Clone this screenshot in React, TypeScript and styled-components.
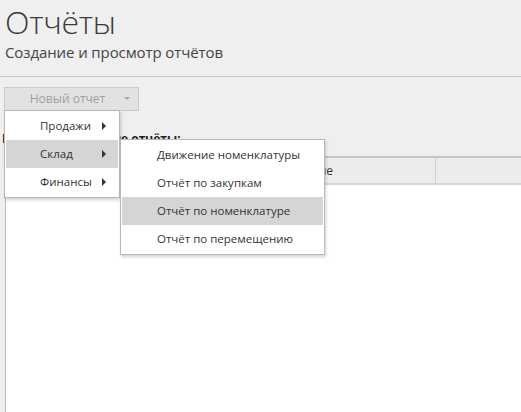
import styled, { createGlobalStyle } from 'styled-components';

const GlobalStyle = createGlobalStyle`
  html, body {
    margin: 0;
    padding: 0;
    background: #efefef;
    font-family: 'Open Sans', 'Noto Sans', sans-serif;
    color: #333;
  }
`;

const Page = styled.div`
  min-height: 100vh;
  display: flex;
  flex-direction: column;
  box-sizing: border-box;
`;

const Header = styled.header`
  height: 76px;
  padding: 0 5px;
  border-bottom: 1px solid #c6c6c6;
  box-sizing: content-box;
`;

const Title = styled.h1`
  margin: 0;
  padding-top: 2px;
  font-size: 32px;
  font-weight: 300;
  line-height: 40px;
  color: #3a3a3a;
  letter-spacing: -0.3px;
`;

const Subtitle = styled.p`
  margin: 0;
  font-size: 15px;
  line-height: 20px;
  color: #444;
  letter-spacing: -0.1px;
`;

const Toolbar = styled.div`
  padding: 9px 4px 0;
`;

const Dropdown = styled.div`
  position: relative;
  display: inline-block;
`;

const DropButton = styled.button`
  width: 135px;
  height: 24px;
  padding: 0;
  background: #e2e2e2;
  border: 1px solid #cacaca;
  font-family: inherit;
  font-size: 12px;
  color: #a0a0a0;
  display: flex;
  align-items: center;
  justify-content: space-between;
`;

const ButtonLabel = styled.span`
  flex: 1;
  text-align: center;
  padding-left: 6px;
`;

const Caret = styled.span`
  width: 0;
  height: 0;
  margin-right: 8px;
  border-left: 3px solid transparent;
  border-right: 3px solid transparent;
  border-top: 3px solid #a8a8a8;
`;

const Menu = styled.ul<{ $top: number; $left: string; $width: number }>`
  position: absolute;
  top: ${(p) => p.$top}px;
  left: ${(p) => p.$left};
  width: ${(p) => p.$width}px;
  margin: 0;
  padding: 1px;
  list-style: none;
  background: #fff;
  border: 1px solid #b8b8b8;
  box-shadow: 1px 2px 3px rgba(0, 0, 0, 0.18);
  z-index: 10;
`;

const MenuItem = styled.li<{ $active?: boolean; $indent: number }>`
  position: relative;
  height: 28px;
  padding-left: ${(p) => p.$indent}px;
  display: flex;
  align-items: center;
  font-size: 11.5px;
  color: #333;
  white-space: nowrap;
  background: ${(p) => (p.$active ? '#d5d5d5' : 'transparent')};
`;

const ItemText = styled.span`
  width: 62px;
`;

const Arrow = styled.span`
  width: 0;
  height: 0;
  border-top: 4px solid transparent;
  border-bottom: 4px solid transparent;
  border-left: 4px solid #333;
`;

const ListLabel = styled.div`
  padding: 19px 0 0 2px;
  height: 45px;
  font-size: 12px;
  font-weight: 700;
  line-height: 17px;
  color: #222;
  box-sizing: border-box;
`;

const Table = styled.div`
  flex: 1;
  margin-left: 5px;
  border-left: 1px solid #bdbdbd;
  border-top: 2px solid #c4c4c4;
  display: flex;
  flex-direction: column;
  background: #fff;
`;

const HeadRow = styled.div`
  height: 25px;
  display: grid;
  grid-template-columns: 232px 198px 1fr;
  background: #ececec;
  border-bottom: 2px solid #d6d6d6;
`;

const HeadCell = styled.div`
  padding-left: 6px;
  display: flex;
  align-items: center;
  font-size: 12px;
  color: #333;
  border-right: 1px solid #d0d0d0;

  &:last-child {
    border-right: none;
  }
`;

const subItems = [
  'Движение номенклатуры',
  'Отчёт по закупкам',
  'Отчёт по номенклатуре',
  'Отчёт по перемещению',
];

export default function App() {
  return (
    <Page>
      <GlobalStyle />
      <Header>
        <Title>Отчёты</Title>
        <Subtitle>Создание и просмотр отчётов</Subtitle>
      </Header>
      <Toolbar>
        <Dropdown>
          <DropButton>
            <ButtonLabel>Новый отчет</ButtonLabel>
            <Caret />
          </DropButton>
          <Menu $top={23} $left="0" $width={112}>
            <MenuItem $indent={34}>
              <ItemText>Продажи</ItemText>
              <Arrow />
            </MenuItem>
            <MenuItem $indent={34} $active>
              <ItemText>Склад</ItemText>
              <Arrow />
              <Menu $top={-1} $left="calc(100% + 2px)" $width={201}>
                {subItems.map((s) => (
                  <MenuItem key={s} $indent={35} $active={s === 'Отчёт по номенклатуре'}>
                    {s}
                  </MenuItem>
                ))}
              </Menu>
            </MenuItem>
            <MenuItem $indent={34}>
              <ItemText>Финансы</ItemText>
              <Arrow />
            </MenuItem>
          </Menu>
        </Dropdown>
      </Toolbar>
      <ListLabel>Недавно созданные отчёты:</ListLabel>
      <Table>
        <HeadRow>
          <HeadCell>Дата</HeadCell>
          <HeadCell>Наименование</HeadCell>
          <HeadCell />
        </HeadRow>
      </Table>
    </Page>
  );
}
